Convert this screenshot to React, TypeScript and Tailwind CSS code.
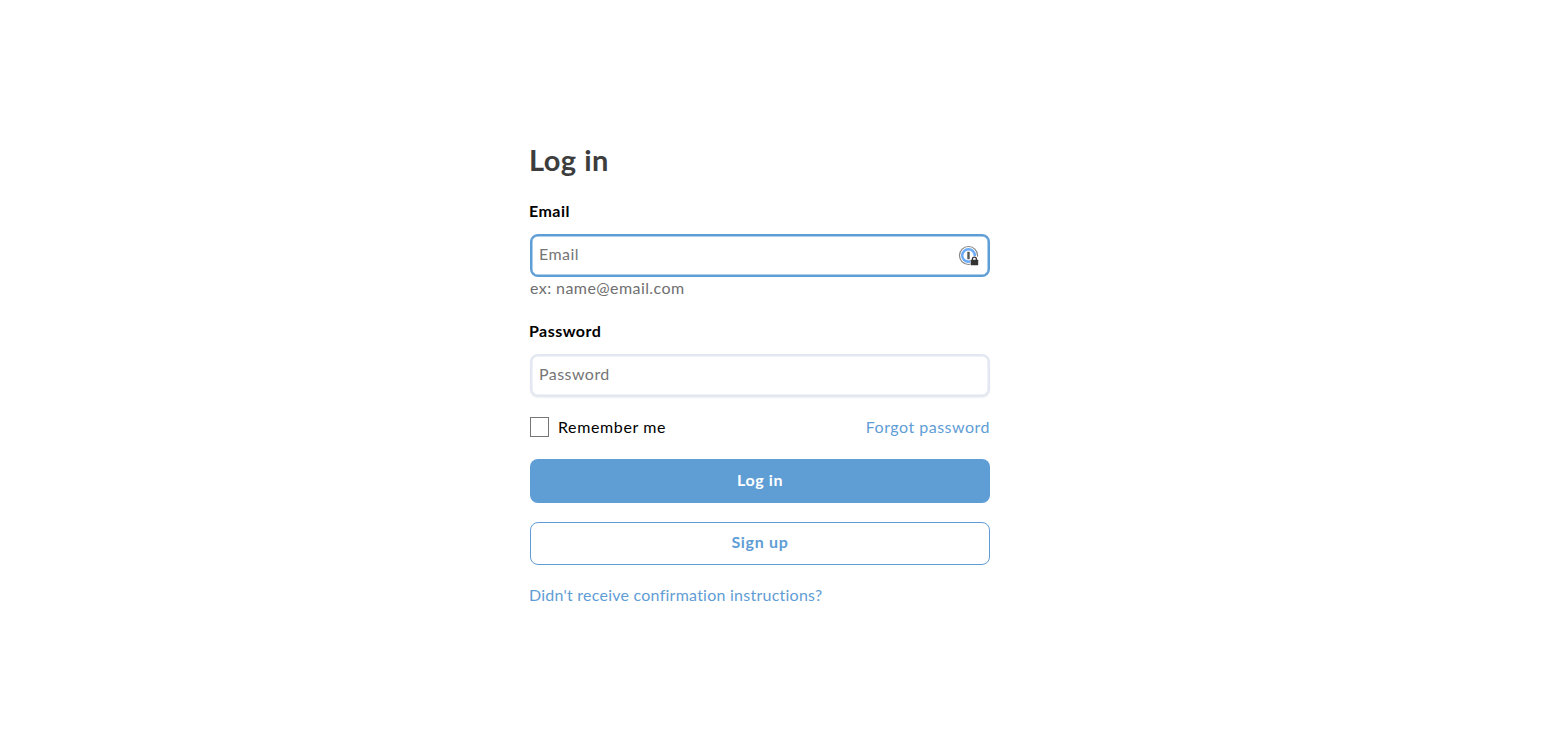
import { useState } from 'react';

interface FieldProps {
  label: string;
  type: string;
  inputClass: string;
  hint?: string;
  children?: React.ReactNode;
}

function Field({ label, type, inputClass, hint, children }: FieldProps) {
  const [value, setValue] = useState<string>('');

  return (
    <div className="flex flex-col">
      <label htmlFor={type} className="-ml-px text-base leading-6 font-bold tracking-[0.45px] text-black">
        {label}
      </label>
      <div className="relative mt-[11px]">
        <input
          id={type}
          type={type}
          placeholder={label}
          value={value}
          onChange={(e) => setValue(e.target.value)}
          className={`block h-[43px] w-full rounded-lg border-2 bg-white pr-10 pb-1 pl-[7px] text-base tracking-[0.45px] text-black outline-none placeholder:text-[#757575] ${inputClass}`}
        />
        {children}
      </div>
      {hint && <p className="-mt-px text-base leading-6 tracking-[0.42px] text-[#6f6f6f]">{hint}</p>}
    </div>
  );
}

function KeyIcon() {
  return (
    <svg className="absolute top-[11px] right-[10px]" width="22" height="22" viewBox="0 0 22 22" fill="none">
      <circle cx="10.5" cy="10.5" r="9" stroke="#858585" strokeWidth="1.2" />
      <circle cx="10.5" cy="10.5" r="6.3" stroke="#6aaaf8" strokeWidth="2.5" />
      <rect x="9.3" y="6.8" width="2.4" height="7.4" rx="0.3" fill="#555" />
      <path d="M12.2 13.6l1.6-2.6h5l2.2 2.6v7.4h-8.8z" fill="#fff" />
      <path d="M14.4 15.6v-1.4a2 2 0 0 1 4 0v1.4" stroke="#333" strokeWidth="1.3" />
      <rect x="12.7" y="14.8" width="7.5" height="5.5" rx="0.5" fill="#333" />
    </svg>
  );
}

function App() {
  const [remember, setRemember] = useState<boolean>(false);

  return (
    <main className="min-h-screen bg-white pt-[142px] font-['Lato',sans-serif]">
      <form className="ml-[530px] flex w-[460px] flex-col">
        <h1 className="-ml-px text-[29px] leading-9 font-bold tracking-[0.5px] text-[#3d3d3d]">Log in</h1>
        <div className="mt-[21px]">
          <Field
            label="Email"
            type="email"
            inputClass="border-[#5f9dd5] shadow-[inset_0_0_0_0.5px_#5f9dd5]"
            hint="ex: name@email.com"
          >
            <KeyIcon />
          </Field>
        </div>
        <div className="mt-[19px]">
          <Field
            label="Password"
            type="password"
            inputClass="border-[#e2e7f0] shadow-[inset_0_0_0_0.5px_#e2e7f0,0_1px_2px_0_rgba(0,0,0,0.06)]"
          />
        </div>
        <div className="mt-[18px] flex h-6 items-center justify-between text-base leading-6">
          <label className="flex items-center text-black">
            <input
              type="checkbox"
              checked={remember}
              onChange={() => setRemember(!remember)}
              className="h-5 w-[19px] appearance-none border border-[#767676] bg-white checked:bg-[#5f9dd5]"
            />
            <span className="ml-[9px] tracking-[0.62px]">Remember me</span>
          </label>
          <a href="#" className="tracking-[0.5px] text-[#5f9dd5]">
            Forgot password
          </a>
        </div>
        <button
          type="button"
          className="mt-5 h-11 rounded-lg bg-[#5f9dd5] pb-0.5 text-base font-bold tracking-[0.6px] text-white"
        >
          Log in
        </button>
        <button
          type="button"
          className="mt-[19px] h-[43px] rounded-lg border border-[#5f9dd5] pb-[3px] text-base font-bold tracking-[0.7px] text-[#5f9dd5]"
        >
          Sign up
        </button>
        <a href="#" className="mt-[18px] -ml-px self-start text-base leading-6 tracking-[0.24px] text-[#5f9dd5]">
          Didn't receive confirmation instructions?
        </a>
      </form>
    </main>
  );
}

export default App;
